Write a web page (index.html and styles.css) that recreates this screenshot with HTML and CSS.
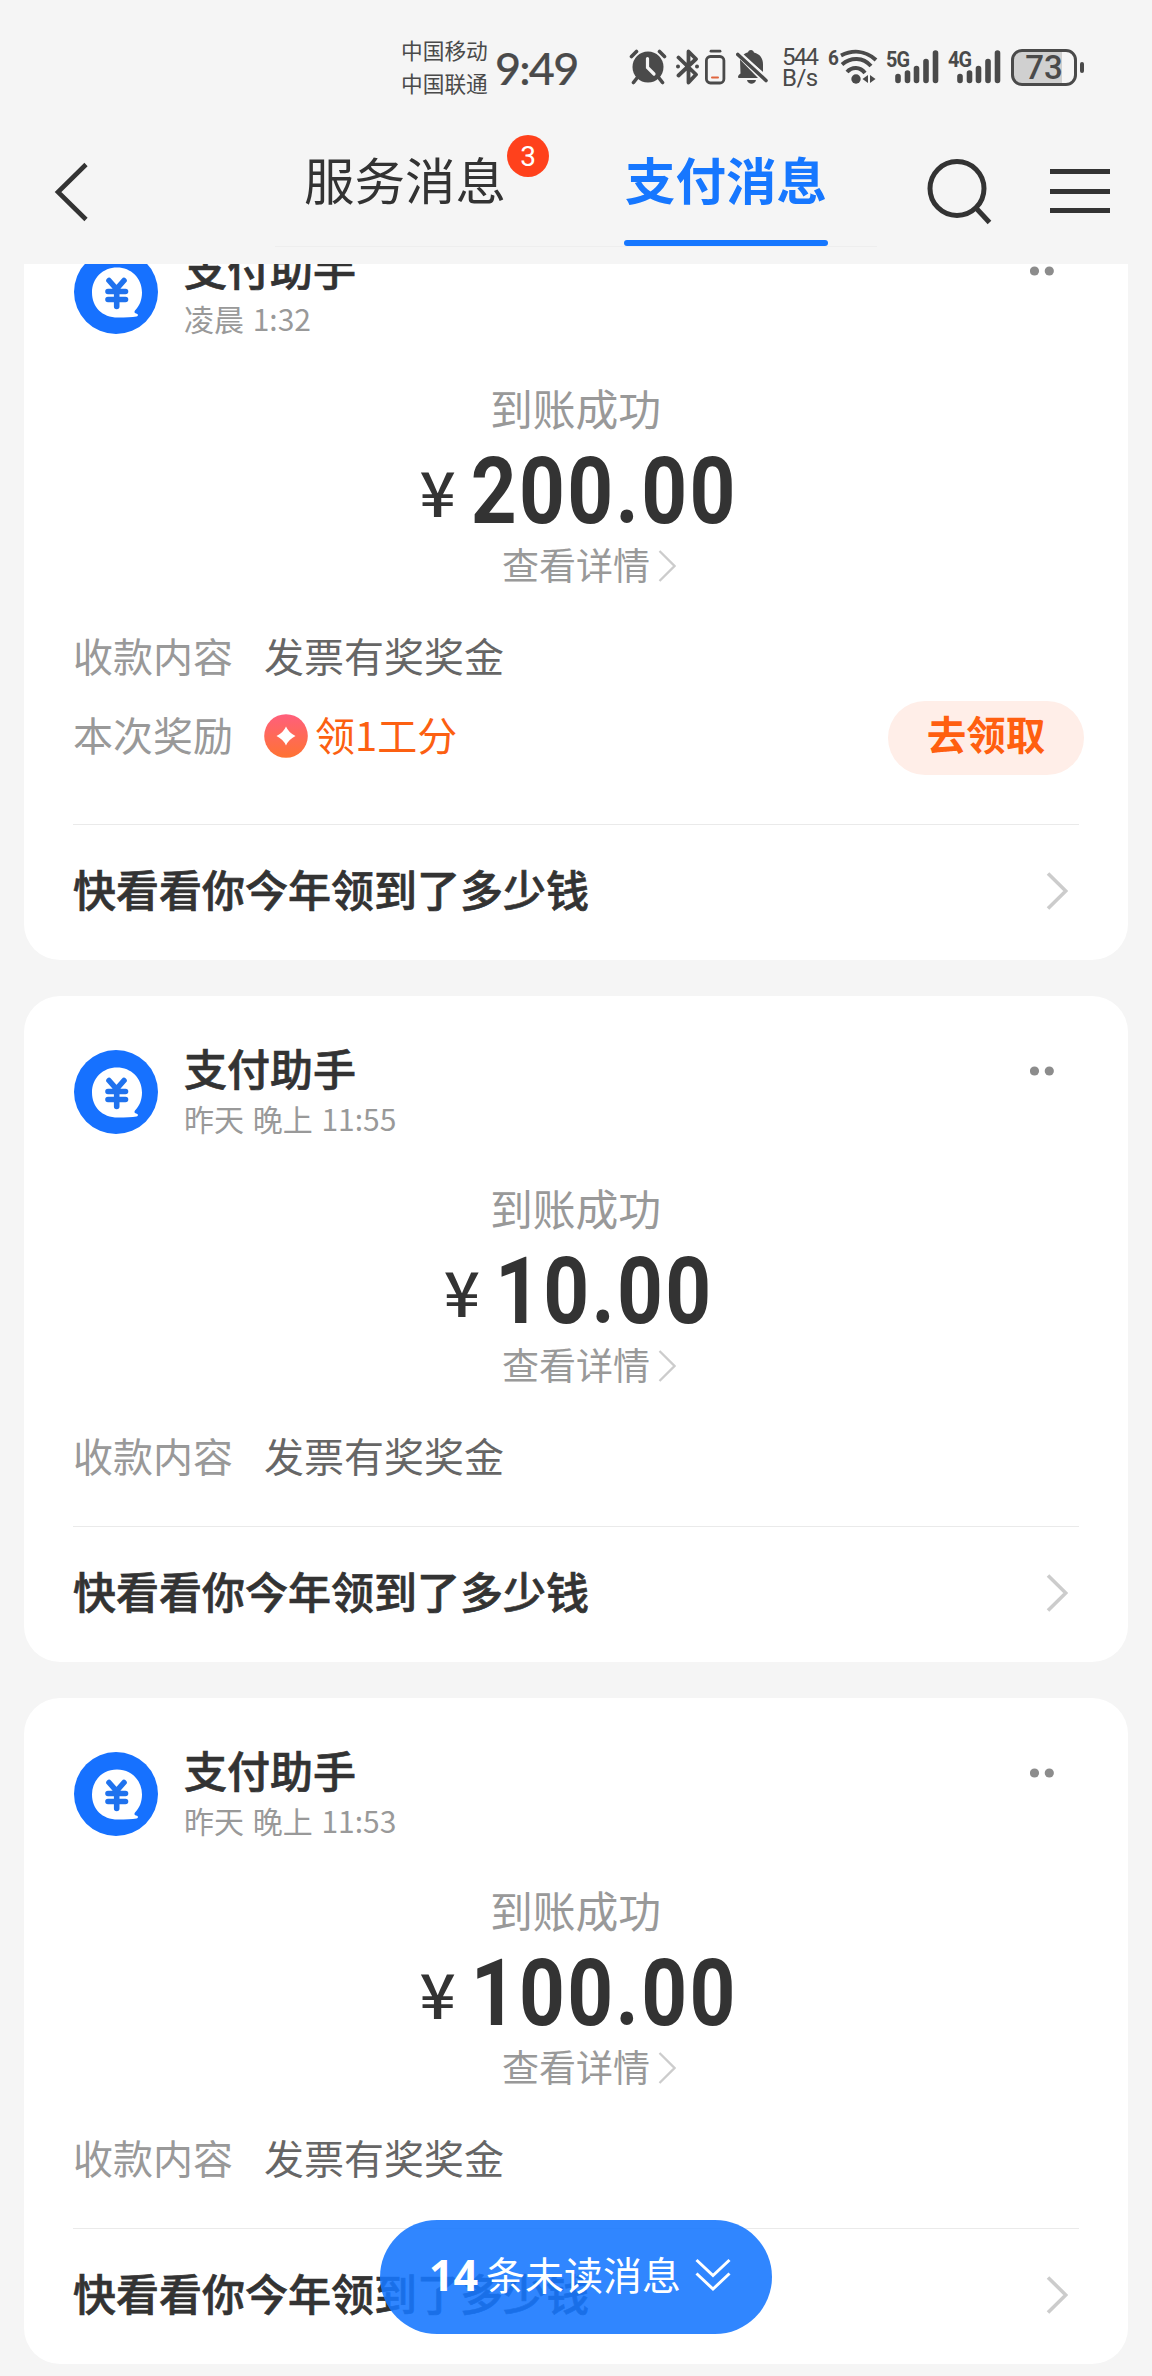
FILE: index.html
```html
<!DOCTYPE html>
<html lang="zh-CN">
<head>
<meta charset="utf-8">
<title>支付消息</title>
<link rel="stylesheet" href="styles.css">
</head>
<body>
<svg width="0" height="0" class="defs">
  <defs>
    <linearGradient id="coin" x1="0" y1="0" x2="0" y2="1"><stop offset="0" stop-color="#ff5f7c"/><stop offset="1" stop-color="#ff7333"/></linearGradient>
    <symbol id="avatar" viewBox="0 0 84 84">
      <circle cx="42" cy="42" r="42" fill="#1671ff"/>
      <path d="M43 17.500C29 17.500 18 28 18 42.500C18 57 28 67.500 44 67.500C52 67.500 58 67.200 62.500 66.500C64.500 66.200 64.500 63.800 62 63.500C60.500 63.200 60 62 61 60.500C65.500 56 68 50 68 42.500C68 28 57 17.500 43 17.500Z" fill="#fff"/>
      <path d="M35 30.500l7.500 8.500 7.500-8.500M34 41.500h17.500M34 49.500h17.500M42.700 40v16.500" fill="none" stroke="#1f72ee" stroke-width="5.600" stroke-linecap="round" stroke-linejoin="round"/>
    </symbol>
    <symbol id="dots" viewBox="0 0 24 10"><circle cx="4.500" cy="5" r="4.600" fill="#8c8c8c"/><circle cx="19.300" cy="5" r="4.600" fill="#8c8c8c"/></symbol>
    <symbol id="more" viewBox="0 0 22 38"><path d="M2 1.500L19.800 19 2 36.500" fill="none" stroke="#ccc" stroke-width="3.600"/></symbol>
    <symbol id="thin" viewBox="0 0 18 32"><path d="M1.500 1L16.500 16 1.500 31" fill="none" stroke="#ccc" stroke-width="2.300"/></symbol>
  </defs>
</svg>
<div class="screen">
  <header class="top">
    <div class="status">
      <div class="carriers"><span>中国移动</span><span>中国联通</span></div>
      <div class="clock">9:49</div>
      <svg class="i-alarm" width="38" height="36" viewBox="0 0 38 36" fill="none" stroke="#4a4a4a" stroke-width="3.600" stroke-linecap="round"><circle cx="19" cy="18" r="15.500" fill="#4a4a4a" stroke="none"/><path d="M8 29l-3.500 4.500M30 29l3.500 4.500M2.500 7.500l5-5M35.500 7.500l-5-5"/><path d="M18.500 9.500v9l6.500 6.500" stroke="#f5f5f5" stroke-width="3.200"/></svg>
      <svg class="i-bt" width="23" height="36" viewBox="0 0 23 36" fill="none" stroke="#4a4a4a" stroke-width="3.800" stroke-linejoin="round" stroke-linecap="round"><path d="M2.500 8.500l17.500 17-7.500 8V2.500l7.500 7.500L2.500 26.500"/><circle cx="2" cy="17.500" r="1" stroke-width="2"/><circle cx="21" cy="17.500" r="1" stroke-width="2"/></svg>
      <svg class="i-cell" width="22" height="36" viewBox="0 0 22 36" fill="none" stroke="#4a4a4a" stroke-width="2.800" stroke-linecap="round"><path d="M7 2.200h9"/><rect x="2.400" y="7.500" width="17.500" height="26.500" rx="4"/><path d="M8 28.500h6" stroke="#e0653e" stroke-width="2"/></svg>
      <svg class="i-bell" width="32" height="36" viewBox="0 0 32 36"><path d="M15 1c1.500 0 2.500 1 3 2.500 6 1.500 9 6 9 12V23l-20-17c2-1.500 3-2.200 5-2.700C12.500 1.800 13.500 1 15 1ZM4 10.500L22 29H2.500C1.500 27.500 2 26.500 4.500 24.500ZM11 31h9c-1 5-8 5-9 0Z" fill="#4a4a4a"/><path d="M4 3.500L32 29.500" stroke="#f5f5f5" stroke-width="2.200"/><path d="M1.800 5.500L30 31.500" stroke="#4a4a4a" stroke-width="3.600" stroke-linecap="round"/></svg>
      <div class="speed"><span>544</span><span class="unit">B/s</span></div>
      <div class="gen six">6</div>
      <svg class="i-wifi" width="38" height="36" viewBox="0 0 38 36" fill="none" stroke="#4a4a4a" stroke-width="4"><path d="M1 6.500C12 1 25 1 36 11M2 15.500C11 8 23 8 31 17M7 23c5-5.500 13-5.500 18 1" /><circle cx="16" cy="30" r="4.700" fill="#4a4a4a" stroke="none"/><path d="M28 26v8l-5.500-4ZM30 26v8l5.500-4Z" fill="#4a4a4a" stroke="none"/></svg>
      <div class="signal"><span class="gen">5G</span><svg width="44" height="36" viewBox="0 0 44 36" stroke="#4a4a4a" stroke-width="5.600" stroke-linecap="round"><path d="M3 27.500v4M12.500 24v7.500M21.500 19.500v12M31 12.500v19M40.500 4v27.500"/></svg></div>
      <div class="signal second"><span class="gen">4G</span><svg width="44" height="36" viewBox="0 0 44 36" stroke="#4a4a4a" stroke-width="5.600" stroke-linecap="round"><path d="M3 27.500v4M12.500 24v7.500M21.500 19.500v12M31 12.500v19M40.500 4v27.500"/></svg></div>
      <div class="battery"><span>73</span></div><i class="nub"></i>
    </div>
    <nav class="bar">
      <svg class="back" width="36" height="60" viewBox="0 0 36 60" fill="none" stroke="#333" stroke-width="4.600"><path d="M33 2.500L5 30l28 27.500"/></svg>
      <div class="tabs">
        <div class="tab">服务消息<b class="badge">3</b></div>
        <div class="tab active">支付消息</div>
      </div>
      <svg class="search" width="68" height="68" viewBox="0 0 68 68" fill="none" stroke="#333" stroke-width="5"><circle cx="31" cy="31.500" r="27"/><path d="M50 51l13.500 14.500"/></svg>
      <div class="menu"><i></i><i></i><i></i></div>
    </nav>
  </header>
  <main class="list">
    <article class="card">
      <div class="head"><svg class="avatar"><use href="#avatar"/></svg><div class="who"><h2>支付助手</h2><p>凌晨 1:32</p></div><svg class="dots"><use href="#dots"/></svg></div>
      <div class="result">到账成功</div>
      <div class="amount"><span class="yen">¥</span><span class="num">200.00</span></div>
      <div class="detail">查看详情<svg class="thin"><use href="#thin"/></svg></div>
      <div class="row"><span class="key">收款内容</span><span class="val">发票有奖奖金</span></div>
      <div class="row reward"><span class="key">本次奖励</span><svg class="coin" viewBox="0 0 44 44"><circle cx="22" cy="22" r="21.800" fill="url(#coin)"/><path d="M22 12.500Q24.500 18.500 31.500 22Q24.500 25.500 22 31.500Q19.500 25.500 12.500 22Q19.500 18.500 22 12.500Z" fill="#fff"/></svg><span class="val">领1工分</span><button class="claim">去领取</button></div>
      <div class="foot"><span>快看看你今年领到了多少钱</span><svg class="more"><use href="#more"/></svg></div>
    </article>
    <article class="card">
      <div class="head"><svg class="avatar"><use href="#avatar"/></svg><div class="who"><h2>支付助手</h2><p>昨天 晚上 11:55</p></div><svg class="dots"><use href="#dots"/></svg></div>
      <div class="result">到账成功</div>
      <div class="amount"><span class="yen">¥</span><span class="num">10.00</span></div>
      <div class="detail">查看详情<svg class="thin"><use href="#thin"/></svg></div>
      <div class="row"><span class="key">收款内容</span><span class="val">发票有奖奖金</span></div>
      <div class="foot"><span>快看看你今年领到了多少钱</span><svg class="more"><use href="#more"/></svg></div>
    </article>
    <article class="card">
      <div class="head"><svg class="avatar"><use href="#avatar"/></svg><div class="who"><h2>支付助手</h2><p>昨天 晚上 11:53</p></div><svg class="dots"><use href="#dots"/></svg></div>
      <div class="result">到账成功</div>
      <div class="amount"><span class="yen">¥</span><span class="num">100.00</span></div>
      <div class="detail">查看详情<svg class="thin"><use href="#thin"/></svg></div>
      <div class="row"><span class="key">收款内容</span><span class="val">发票有奖奖金</span></div>
      <div class="foot"><span>快看看你今年领到了多少钱</span><svg class="more"><use href="#more"/></svg></div>
    </article>
  </main>
  <div class="unread"><b>14</b><span>条未读消息</span><svg width="36" height="34" viewBox="0 0 36 34" fill="none" stroke="#fff" stroke-width="3"><path d="M1.500 2L18 17.500 34.500 2M1.500 15.500L18 31 34.500 15.500"/></svg></div>
</div>
</body>
</html>
```
FILE: styles.css
```css
* { box-sizing: border-box; margin: 0; padding: 0; }
body {
  width: 1152px; height: 2376px; overflow: hidden;
  background: #f5f5f5; color: #333;
  font-family: "Noto Sans CJK SC", sans-serif;
}
svg { display: block; flex: none; }
.defs { position: absolute; }
.screen { position: relative; height: 2376px; display: flex; flex-direction: column; }
span, p, h2, .tab, .result { white-space: nowrap; }

/* status bar */
.top { height: 264px; flex: none; background: #f5f5f5; position: relative; z-index: 1; }
.status { height: 134px; padding-left: 401px; display: flex; align-items: center; color: #4a4a4a; }
.carriers { width: 94px; display: flex; flex-direction: column; font-size: 21.700px; line-height: 33px; padding-bottom: 3px; }
.clock { width: 134px; font: 500 45px/50px Lato, sans-serif; letter-spacing: -1.800px; padding-top: 1px; -webkit-text-stroke: .2px #4a4a4a; }
.i-bt { margin-left: 9px; }
.i-cell { margin-left: 5px; }
.i-bell { margin-left: 10px; }
.speed { width: 45px; margin-left: 14px; font: 24px/21px Roboto, sans-serif; letter-spacing: -1.700px; display: flex; flex-direction: column; padding-top: 2px; }
.unit { letter-spacing: -.500px; }
.gen { font: 700 22px/22px Roboto, sans-serif; align-self: flex-start; transform: scaleX(.9); transform-origin: left; }
.six { width: 10px; margin: 47px 0 0 1px; font-size: 21px; }
.i-wifi { margin-left: 2px; }
.signal { position: relative; width: 62px; display: flex; justify-content: center; padding-left: 8px; }
.signal .gen { position: absolute; left: 8px; top: 0; letter-spacing: -1px; }
.signal svg { margin-left: 8px; }
.battery { width: 66px; height: 37px; margin-left: 9px; border: 3px solid #4a4a4a; border-radius: 11px; background: linear-gradient(90deg, #d0d0d0 48px, transparent 48px); font: 500 33px/32px Roboto, sans-serif; text-align: center; }
.nub { width: 4px; height: 11px; margin-left: 3px; border-radius: 2px; background: #4a4a4a; }

/* navigation */
.bar { height: 130px; display: flex; align-items: flex-start; }
.back { margin: 28px 0 0 53px; }
.tabs { margin-left: 186px; width: 602px; height: 113px; border-bottom: 1px solid #eee; display: flex; padding-left: 28px; gap: 117px; }
.tab { position: relative; width: 204px; font-size: 50.500px; line-height: 88px; text-align: center; height: 112px; }
.active { color: #1677ff; font-weight: 700; }
.active::after { content: ""; position: absolute; left: 0; bottom: 0; width: 204px; height: 6px; border-radius: 3px; background: #1677ff; }
.badge { position: absolute; left: 204px; top: 1px; width: 42px; height: 42px; border-radius: 50%; background: #ff411c; color: #fff; font: 400 28px/43px Roboto, sans-serif; }
.search { margin: 23px 0 0 49px; }
.menu { margin: 35px 0 0 56px; width: 60px; display: flex; flex-direction: column; gap: 14.500px; }
.menu i { height: 5px; background: #333; }

/* message cards */
.list { display: flex; flex-direction: column; gap: 36px; margin-top: -68px; padding: 0 24px; }
.card { background: #fff; border-radius: 36px; padding: 50px 49px 0; height: 666px; }
.card:first-child { height: 764px; }
.head { display: flex; height: 110px; padding-left: 1px; }
.avatar { width: 84px; height: 84px; margin-top: 4px; }
.who { margin-left: 26px; flex: 1; }
h2 { font-size: 43px; line-height: 43px; font-weight: 500; -webkit-text-stroke: .7px #333; }
.who p { font-size: 30px; line-height: 36px; margin-top: 11px; color: #999; word-spacing: 2px; }
.dots { width: 24px; height: 10px; margin: 20px 25px 0 0; }
.result { text-align: center; font-size: 42.800px; line-height: 50px; margin: 26px 1px 0 0; color: #999; }
.amount { display: flex; justify-content: center; height: 110px; gap: 17px; padding-left: 6px; transform: scaleX(.87); }
.yen { font-size: 62px; line-height: 116px; font-weight: 500; width: 42px; transform: scaleX(1.18); transform-origin: left; }
.num { font: 700 92px/120px Roboto, sans-serif; letter-spacing: 2.700px; }
.detail { display: flex; justify-content: center; align-items: center; font-size: 37px; line-height: 44px; color: #999; padding-left: 26px; }
.thin { width: 18px; height: 32px; margin: 3px 0 0 8px; }
.row { display: flex; align-items: center; height: 50px; margin-top: 44px; font-size: 40px; color: #666; line-height: 50px; }
.key { width: 191px; color: #999; }
.reward { height: 74px; margin-top: 21px; margin-right: -5px; color: #fc6011; }
.reward .key { padding-bottom: 8px; }
.coin { width: 44px; height: 44px; margin-top: -5px; }
.reward .val { margin-left: 7px; padding-bottom: 9px; flex: 1; }
.claim { width: 196px; height: 74px; border: 0; border-radius: 37px; background: #ffeee8; color: #ff5f10; font: 700 39.500px/64px "Noto Sans CJK SC", sans-serif; padding-bottom: 10px; }
.foot { display: flex; justify-content: space-between; align-items: center; height: 137px; margin-top: 46px; border-top: 1px solid #eaeaea; font-size: 43px; font-weight: 500; -webkit-text-stroke: .7px #333; }
.reward + .foot { margin-top: 49px; }
.foot span { padding-bottom: 10px; }
.more { width: 22px; height: 38px; margin: 0 11px 4px 0; }

/* floating unread counter */
.unread { position: absolute; z-index: 2; left: 380px; top: 2220px; width: 392px; height: 114px; border-radius: 57px; background: rgba(22, 119, 255, .89); color: #fff; display: flex; align-items: center; padding: 0 0 5px 49px; font-size: 39px; }
.unread b { font: 700 43px/50px "Noto Sans", sans-serif; width: 57px; }
.unread span { width: 209px; padding-bottom: 3px; }
```
